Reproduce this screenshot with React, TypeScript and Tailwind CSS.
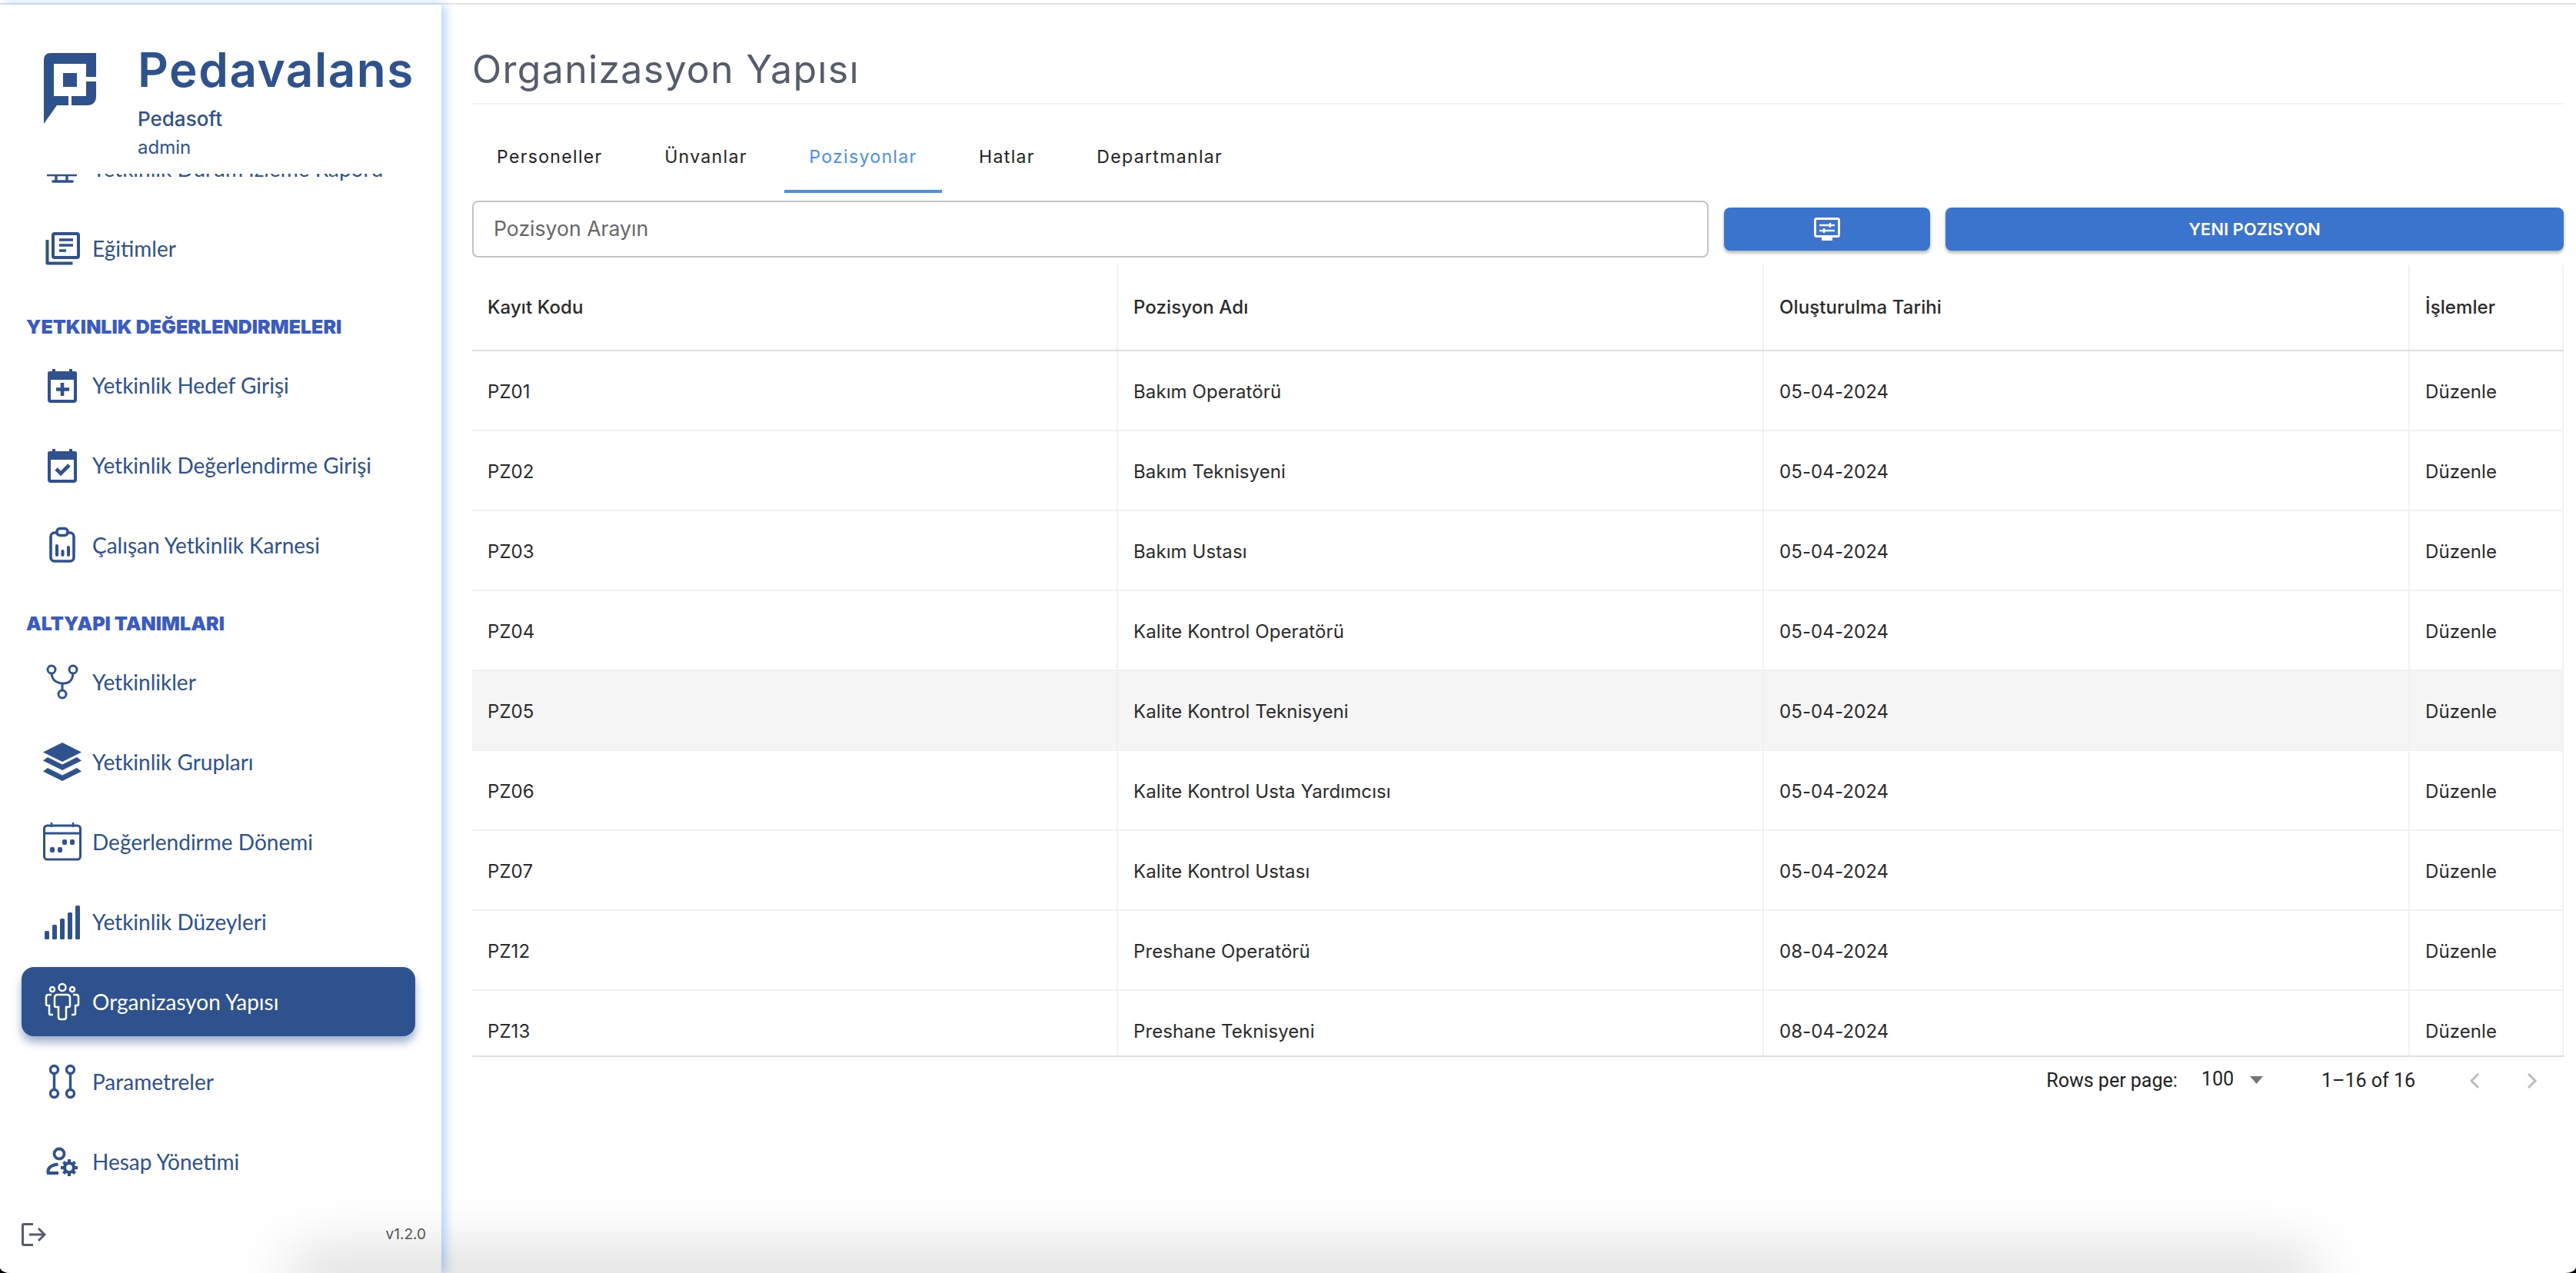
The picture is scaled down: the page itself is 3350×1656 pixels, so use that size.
import type { ReactNode } from 'react'

const NAVY = '#2d528e'

function Svg({ children, className = 'text-[#2d528e]' }: { children: ReactNode; className?: string }) {
  return (
    <svg viewBox="0 0 50 50" className={`w-[50px] h-[50px] shrink-0 ${className}`} fill="none" stroke="currentColor" strokeWidth="3.4">
      {children}
    </svg>
  )
}

const ICONS: Record<string, ReactNode> = {
  report: (
    <Svg>
      <path d="M5 34h39" strokeWidth="2.600" />
      <path d="M17 34v7M31 34v7" strokeWidth="3.400" />
      <path d="M13 42h25" strokeWidth="3.600" strokeLinecap="round" />
    </Svg>
  ),
  books: (
    <Svg>
      <path d="M5.500 14v30.500h33" strokeWidth="4" strokeLinejoin="round" />
      <rect x="13" y="6" width="33" height="31" rx="2" strokeWidth="4" />
      <path d="M21 14h18M21 21h18M21 28h9" strokeWidth="3.600" />
    </Svg>
  ),
  calendarPlus: (
    <Svg>
      <path d="M14 4v6M36 4v6" strokeWidth="4" />
      <path d="M6 10q0-3 3-3h32q3 0 3 3v8H6z" fill="currentColor" stroke="none" />
      <rect x="8" y="9" width="34" height="37" rx="2" strokeWidth="4" />
      <path d="M25 22v17M17 30.500h17" strokeWidth="4.600" />
    </Svg>
  ),
  calendarCheck: (
    <Svg>
      <path d="M14 4v6M36 4v6" strokeWidth="4" />
      <path d="M6 10q0-3 3-3h32q3 0 3 3v8H6z" fill="currentColor" stroke="none" />
      <rect x="8" y="9" width="34" height="37" rx="2" strokeWidth="4" />
      <path d="M17 30l6 6 11-11" strokeWidth="4.600" />
    </Svg>
  ),
  clipboard: (
    <Svg>
      <rect x="10" y="9" width="30" height="37" rx="5" strokeWidth="3.600" />
      <rect x="18" y="3.500" width="14" height="9" rx="4" fill="#fff" strokeWidth="3.600" />
      <path d="M18 26v12M25.500 33v5M33 28v10" strokeWidth="4" strokeLinecap="round" />
    </Svg>
  ),
  fork: (
    <Svg>
      <circle cx="11" cy="9" r="5" strokeWidth="3" />
      <circle cx="39" cy="9" r="5" strokeWidth="3" />
      <circle cx="25" cy="41" r="5" strokeWidth="3" />
      <path d="M11 14q1 12 14 13t14-13M25 27v9" strokeWidth="3" />
    </Svg>
  ),
  layers: (
    <Svg>
      <path d="M25 0l25 12.500-25 12.500-25-12.500z" fill="currentColor" stroke="none" />
      <path d="M6 19l19 9.500 19-9.500 6 4.500-25 12.500-25-12.500z" fill="currentColor" stroke="none" />
      <path d="M6 33l19 9.500 19-9.500 6 4.500-25 12.500-25-12.500z" fill="currentColor" stroke="none" />
    </Svg>
  ),
  calendarDots: (
    <Svg>
      <path d="M11 0v6M39 0v6" strokeWidth="2.500" />
      <rect x="1.500" y="4" width="47" height="44" rx="4" strokeWidth="3" />
      <path d="M1.500 14h47" strokeWidth="3" />
      <g fill="currentColor" stroke="none">
        <rect x="9" y="32" width="6" height="7" rx="2" />
        <rect x="19" y="32" width="6" height="7" rx="2" />
        <rect x="25" y="22" width="6" height="7" rx="2" />
        <rect x="35" y="22" width="6" height="7" rx="2" />
      </g>
    </Svg>
  ),
  bars: (
    <Svg>
      <g fill="currentColor" stroke="none">
        <rect x="2" y="37" width="6" height="11" rx="1.500" />
        <rect x="12" y="29" width="6" height="19" rx="1.500" />
        <rect x="22" y="21" width="6" height="27" rx="1.500" />
        <rect x="32" y="13" width="6" height="35" rx="1.500" />
        <rect x="42" y="4" width="6" height="44" rx="1.500" />
      </g>
    </Svg>
  ),
  team: (
    <Svg className="text-white">
      <g strokeWidth="2.500">
        <circle cx="25" cy="6.500" r="4.500" />
        <circle cx="12" cy="9" r="3" />
        <circle cx="38" cy="9" r="3" />
        <path d="M19 16h12q4 0 4 4v10q0 2-2 2h-3v13q0 3-3 3h-4q-3 0-3-3V32h-3q-2 0-2-2V20q0-4 4-4z" />
        <path d="M11 16H7q-3 0-3 3v9q0 2 2 2h2v10q0 2 2 2h3M39 16h4q3 0 3 3v9q0 2-2 2h-2v10q0 2-2 2h-3" />
      </g>
    </Svg>
  ),
  params: (
    <Svg>
      <g strokeWidth="3.400">
        <circle cx="14.500" cy="9.500" r="5" />
        <circle cx="35.500" cy="9.500" r="5" />
        <circle cx="14.500" cy="40.500" r="5" />
        <circle cx="35.500" cy="40.500" r="5" />
        <path d="M14.500 14.500v21M35.500 14.500v21" />
      </g>
    </Svg>
  ),
  account: (
    <Svg>
      <circle cx="21" cy="15" r="6.500" strokeWidth="3.800" />
      <path d="M6.500 40v-2q0-8 13-9.500" strokeWidth="4" />
      <path d="M5 40h15" strokeWidth="4" />
      <circle cx="34" cy="33" r="6" strokeWidth="4.200" />
      <path d="M34 22v5M34 39v5M23 33h5M40 33h5M26.500 25.500l3 3M38.500 37.500l3 3M41.500 25.500l-3 3M29.500 37.500l-3 3" strokeWidth="4.200" />
    </Svg>
  ),
}

const NAV = [
  { type: 'item', label: 'Yetkinlik Durum İzleme Raporu', icon: 'report' },
  { type: 'item', label: 'Eğitimler', icon: 'books' },
  { type: 'head', label: 'YETKINLIK DEĞERLENDIRMELERI' },
  { type: 'item', label: 'Yetkinlik Hedef Girişi', icon: 'calendarPlus' },
  { type: 'item', label: 'Yetkinlik Değerlendirme Girişi', icon: 'calendarCheck' },
  { type: 'item', label: 'Çalışan Yetkinlik Karnesi', icon: 'clipboard' },
  { type: 'head', label: 'ALTYAPI TANIMLARI' },
  { type: 'item', label: 'Yetkinlikler', icon: 'fork' },
  { type: 'item', label: 'Yetkinlik Grupları', icon: 'layers' },
  { type: 'item', label: 'Değerlendirme Dönemi', icon: 'calendarDots' },
  { type: 'item', label: 'Yetkinlik Düzeyleri', icon: 'bars' },
  { type: 'item', label: 'Organizasyon Yapısı', icon: 'team', active: true },
  { type: 'item', label: 'Parametreler', icon: 'params' },
  { type: 'item', label: 'Hesap Yönetimi', icon: 'account' },
]

const TABS = ['Personeller', 'Ünvanlar', 'Pozisyonlar', 'Hatlar', 'Departmanlar']

const ROWS = [
  ['PZ01', 'Bakım Operatörü', '05-04-2024'],
  ['PZ02', 'Bakım Teknisyeni', '05-04-2024'],
  ['PZ03', 'Bakım Ustası', '05-04-2024'],
  ['PZ04', 'Kalite Kontrol Operatörü', '05-04-2024'],
  ['PZ05', 'Kalite Kontrol Teknisyeni', '05-04-2024'],
  ['PZ06', 'Kalite Kontrol Usta Yardımcısı', '05-04-2024'],
  ['PZ07', 'Kalite Kontrol Ustası', '05-04-2024'],
  ['PZ12', 'Preshane Operatörü', '08-04-2024'],
  ['PZ13', 'Preshane Teknisyeni', '08-04-2024'],
]

function Sidebar() {
  return (
    <aside className="relative z-10 w-[574px] shrink-0 flex flex-col bg-white shadow-[4px_0_14px_#a9cdfa]">
      <div className="relative z-10 h-[220px] shrink-0 flex bg-white pl-[57px] pt-[63px]">
        <svg viewBox="57 69 68 92" className="w-[68px] h-[92px] shrink-0" fill={NAVY}>
          <path d="M66 69H125V100H112V83H70V125H89V137H74L57 161V78Q57 69 66 69Z" />
          <path d="M93 125H112V106H125V125Q125 137 113 137H93Z" />
          <path d="M82 95H100V113H82Z" />
        </svg>
        <div className="ml-[54px] flex flex-col font-['Inter',sans-serif] text-[#2d528e]">
          <div className="text-[62px] leading-[62px] font-semibold tracking-[1.5px] -mt-[9px]">Pedavalans</div>
          <div className="text-[26px] leading-[32px] font-medium mt-[17px]">Pedasoft</div>
          <div className="text-[24px] leading-[30px] mt-[6px]">admin</div>
        </div>
      </div>

      <nav className="flex-1 min-h-0 overflow-hidden font-['Lato',sans-serif]">
        <div className="flex flex-col -mt-[52px] px-[28px]">
          {NAV.map(n =>
            n.type === 'head' ? (
              <div key={n.label} className="h-[74px] -mx-[28px] pl-[34px] pt-[14px] flex items-center text-[25px] font-black font-['Inter',sans-serif] text-[#3a5bc2]">
                {n.label}
              </div>
            ) : (
              <div
                key={n.label}
                className={`h-[90px] mb-[14px] shrink-0 flex items-center gap-[14px] rounded-[16px] pl-[28px] text-[28px] ${
                  n.active ? 'w-[512px] bg-[#2d528e] text-white shadow-[0_8px_12px_rgba(45,82,142,0.45)]' : 'text-[#2d528e]'
                }`}
              >
                {ICONS[n.icon!]}
                <span>{n.label}</span>
              </div>
            ),
          )}
        </div>
      </nav>

      <div className="h-[100px] shrink-0 flex items-center justify-between pl-[28px] pr-[20px]">
        <svg viewBox="0 0 32 30" className="w-[32px] h-[30px]" fill="none" stroke="#545d69" strokeWidth="3">
          <path d="M15 1.500H3q-1.500 0-1.500 1.500v24q0 1.500 1.500 1.500h12" />
          <path d="M10 15h20M22 7l8 8-8 8" />
        </svg>
        <span className="text-[19px] text-[#555] font-['Inter',sans-serif]">v1.2.0</span>
      </div>
    </aside>
  )
}

function Cell({ children, className = '' }: { children: ReactNode; className?: string }) {
  return <div className={`flex items-center pl-[20px] border-r-2 border-[#f1f1f1] ${className}`}>{children}</div>
}

export default function App() {
  return (
    <div className="h-screen w-screen overflow-hidden bg-black">
      <div className="relative h-full flex flex-col overflow-hidden bg-white rounded-b-[14px_8px]">
        <div className="h-[6px] shrink-0 border-b-2 border-[#e4e4e4]" />
        <div className="flex-1 min-h-0 flex">
          <Sidebar />

          <main className="flex-1 min-w-0 pl-[40px] pr-[16px] font-['Inter',sans-serif]">
            <h1 className="h-[130px] pt-[56px] border-b-2 border-[#f2f2f2] text-[50px] leading-[56px] font-normal tracking-[1.3px] text-[#545d69]">
              Organizasyon Yapısı
            </h1>

            <div className="mt-[21px] h-[94px] flex gap-[16.5px] text-[23px] font-normal tracking-[1.35px] text-[#222]">
              {TABS.map(t => (
                <div
                  key={t}
                  className={`px-[32px] pt-[4px] flex items-center border-b-4 ${
                    t === 'Pozisyonlar' ? 'border-[#4a8ff0] text-[#4a8ff0]' : 'border-transparent'
                  }`}
                >
                  {t}
                </div>
              ))}
            </div>

            <div className="mt-[10px] h-[74px] flex items-center gap-[20px]">
              <div className="flex-1 h-full flex items-center pl-[26px] rounded-[8px] border-2 border-[#c4c4c4] text-[26.6px] text-[#666]">
                Pozisyon Arayın
              </div>
              <button className="w-[268px] h-[56px] flex items-center justify-center rounded-[8px] bg-[#3a74cc] shadow-[0_3px_4px_rgba(0,0,0,0.3)]">
                <svg viewBox="0 0 34 30" className="w-[34px] h-[30px]" fill="none" stroke="#fff">
                  <rect x="1.500" y="1.500" width="31" height="23" rx="2" strokeWidth="3" />
                  <path d="M10 26h14v4H10z" fill="#fff" stroke="none" />
                  <path d="M7 10h20M21 7v6M7 17h20M13 14v6" strokeWidth="2.400" />
                </svg>
              </button>
              <button className="w-[804px] h-[56px] flex items-center justify-center rounded-[8px] bg-[#3a74cc] shadow-[0_3px_4px_rgba(0,0,0,0.3)] text-white text-[22px] font-semibold">
                YENI POZISYON
              </button>
            </div>

            <div className="mt-[10px] h-[1030px] overflow-hidden border-b-2 border-[#e0e0e0] text-[24px] tracking-[0.1px] text-[#2a2a2a]">
              <div className="grid grid-cols-[840px_840px_840px_200px] h-[112px] border-b-2 border-[#e0e0e0] font-medium">
                <Cell>Kayıt Kodu</Cell>
                <Cell>Pozisyon Adı</Cell>
                <Cell>Oluşturulma Tarihi</Cell>
                <Cell>İşlemler</Cell>
              </div>
              {ROWS.map(r => (
                <div
                  key={r[0]}
                  className={`grid grid-cols-[840px_840px_840px_200px] h-[104px] border-b-2 border-[#f1f1f1] ${
                    r[0] === 'PZ05' ? 'bg-[#f5f5f5]' : ''
                  }`}
                >
                  <Cell className="pt-[4px]">{r[0]}</Cell>
                  <Cell className="pt-[4px]">{r[1]}</Cell>
                  <Cell className="pt-[4px]">{r[2]}</Cell>
                  <Cell className="pt-[4px]">Düzenle</Cell>
                </div>
              ))}
            </div>

            <div className="h-[62px] flex items-center justify-end pr-[34px] font-['Roboto',sans-serif] text-[25px] text-[#222]">
              <span>Rows per page:</span>
              <span className="ml-[31px] -mt-[4px]">100</span>
              <svg viewBox="0 0 17 10" className="ml-[21px] w-[17px] h-[10px] -mt-[2px]">
                <path d="M0 0h17L8.500 10z" fill="#757575" />
              </svg>
              <span className="ml-[76px]">1–16 of 16</span>
              <svg viewBox="0 0 14 20" className="ml-[70px] w-[14px] h-[20px]" fill="none" stroke="#bdbdbd" strokeWidth="3">
                <path d="M12 1L3 10l9 9" />
              </svg>
              <svg viewBox="0 0 14 20" className="ml-[61px] w-[14px] h-[20px]" fill="none" stroke="#bdbdbd" strokeWidth="3">
                <path d="M2 1l9 9-9 9" />
              </svg>
            </div>
          </main>
        </div>
        <div className="absolute z-20 left-[400px] right-[360px] top-full h-[10px] pointer-events-none shadow-[0_0_80px_20px_rgba(0,0,0,0.2)]" />
      </div>
    </div>
  )
}
